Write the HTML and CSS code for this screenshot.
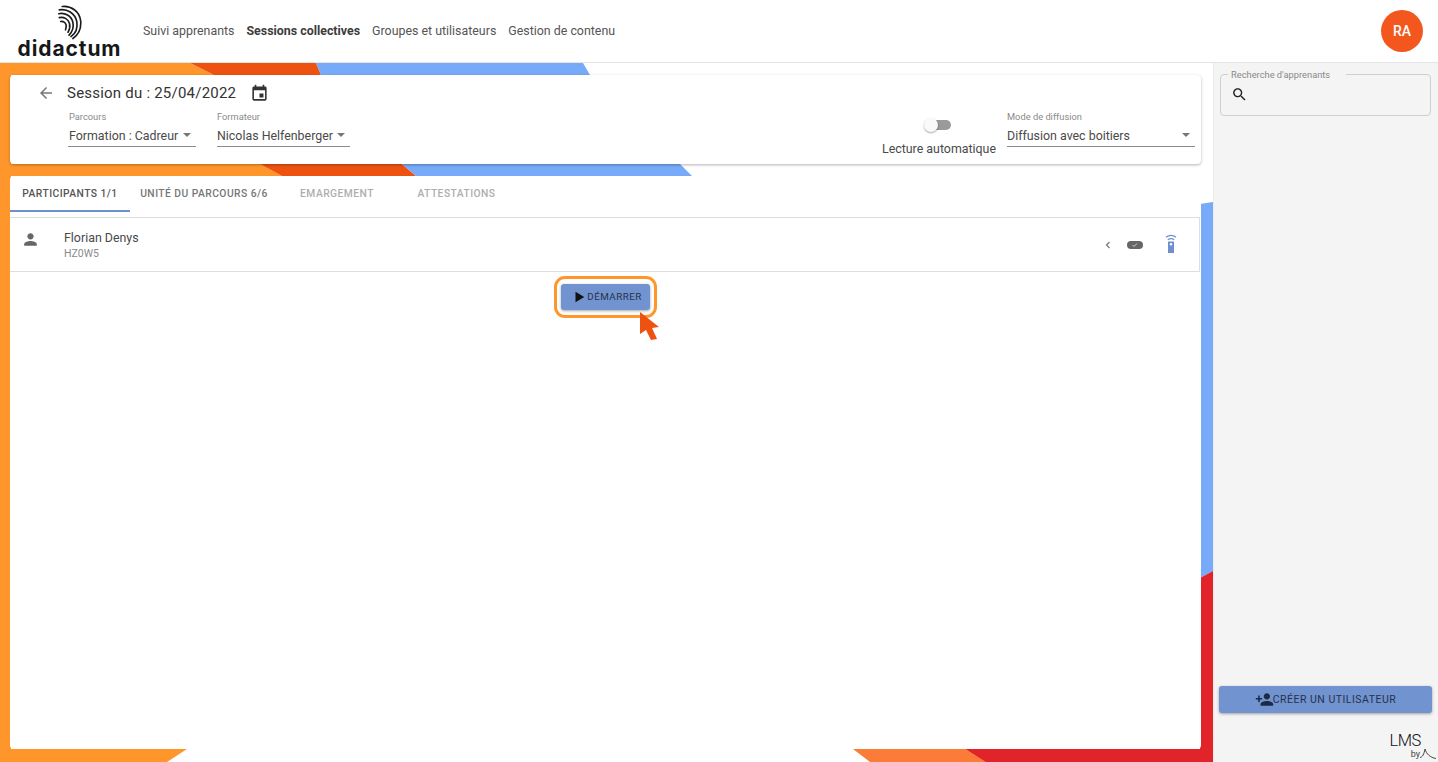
FILE: index.html
```html
<!DOCTYPE html>
<html lang="fr">
<head>
  <meta charset="UTF-8" />
  <meta name="viewport" content="width=device-width, initial-scale=1.0"/>
  <title>Sessions collectives - didactum</title>
  <link rel="stylesheet" href="styles.css">
</head>
<body>
  <header class="topbar">
    <div class="logo">
      <svg class="logo-mark" viewBox="0 0 26 36" fill="none" stroke="#1c1c1c" stroke-linecap="round">
        <path d="M5 1.500c9-1 18 5 19 15 .6 7-2 14-8 18" stroke-width="1.700"/>
        <path d="M2 5c8-1.500 16 3.500 18 12 1 6-1 12-6 15.500" stroke-width="1.700"/>
        <path d="M1.500 9c6-1.500 13 2 14.500 9 1 5-.5 9.500-4 13" stroke-width="1.700"/>
        <path d="M2 13c4.500-1 9 1 10.500 6 .8 3.500 0 6.500-1.500 9" stroke-width="1.700"/>
        <path d="M3.500 17c2.500-.5 5 1 5.500 3.500.4 2 0 3.500-.6 5" stroke-width="1.700"/>
      </svg>
      <span class="logo-name">didactum</span>
    </div>
    <nav class="nav">
      <a>Suivi apprenants</a>
      <a class="active">Sessions collectives</a>
      <a>Groupes et utilisateurs</a>
      <a>Gestion de contenu</a>
    </nav>
    <div class="avatar">RA</div>
  </header>

  <div class="layout">
    <main class="main">
      <svg class="decor" viewBox="0 63 1213 699" preserveAspectRatio="none">
        <rect x="0" y="63" width="11" height="699" fill="#ff962b"/>
        <polygon points="0,63 190,63 214,75 0,75" fill="#ff962b"/>
        <polygon points="190,63 316,63 321,75 214,75" fill="#ee5210"/>
        <polygon points="316,63 583,63 590,75 321,75" fill="#77aaf8"/>
        <polygon points="0,164 260,164 282,176 0,176" fill="#ff962b"/>
        <polygon points="260,164 402,164 416,176 282,176" fill="#ee5210"/>
        <polygon points="402,164 680,164 692,176 416,176" fill="#77aaf8"/>
        <polygon points="1200,204 1213,202 1213,571 1200,578" fill="#77aaf8"/>
        <polygon points="1200,578 1213,571 1213,762 967,762 1200,749" fill="#e1242a"/>
        <polygon points="965,749 1200,749 1213,762 985,762" fill="#e1242a"/>
        <polygon points="853,749 965,749 986,762 870,762" fill="#fb7c38"/>
        <polygon points="0,749 187,749 167,762 0,762" fill="#ff962b"/>
      </svg>

      <section class="card">
        <div class="title-row">
          <svg class="icon back" viewBox="0 0 24 24"><path d="M20 11H7.830l5.590-5.590L12 4l-8 8 8 8 1.410-1.410L7.830 13H20v-2z"/></svg>
          <h1>Session du : 25/04/2022</h1>
          <svg class="icon cal" viewBox="0 0 24 24"><path d="M17 12h-5v5h5v-5zM16 1v2H8V1H6v2H5c-1.110 0-1.990.9-1.990 2L3 19c0 1.100.89 2 2 2h14c1.100 0 2-.9 2-2V5c0-1.100-.9-2-2-2h-1V1h-2zm3 18H5V8h14v11z"/></svg>
        </div>
        <div class="fields">
          <div class="field field-parcours">
            <label>Parcours</label>
            <div class="select"><span>Formation : Cadreur</span><i class="caret"></i></div>
          </div>
          <div class="field field-formateur">
            <label>Formateur</label>
            <div class="select"><span>Nicolas Helfenberger</span><i class="caret"></i></div>
          </div>
          <div class="auto">
            <div class="toggle"><i class="thumb"></i></div>
            <span>Lecture automatique</span>
          </div>
          <div class="field field-mode">
            <label>Mode de diffusion</label>
            <div class="select"><span>Diffusion avec boitiers</span><i class="caret"></i></div>
          </div>
        </div>
      </section>

      <section class="panel">
        <div class="tabs">
          <a class="tab tab-1 active">Participants 1/1</a>
          <a class="tab tab-2">Unité du parcours 6/6</a>
          <a class="tab tab-3 muted">Emargement</a>
          <a class="tab tab-4 muted">Attestations</a>
        </div>

        <div class="participant">
          <svg class="icon person" viewBox="0 0 24 24"><path d="M12 12c2.210 0 4-1.790 4-4s-1.790-4-4-4-4 1.790-4 4 1.790 4 4 4zm0 2c-2.670 0-8 1.340-8 4v2h16v-2c0-2.660-5.330-4-8-4z"/></svg>
          <div class="who">
            <div class="who-name">Florian Denys</div>
            <div class="who-code">HZ0W5</div>
          </div>
          <div class="row-icons">
            <svg class="chev" viewBox="0 0 8 10" fill="none" stroke="#777" stroke-width="1.200"><path d="M5.500 2 2.500 5l3 3"/></svg>
            <svg class="pill" viewBox="0 0 16 8"><rect width="16" height="8" rx="4" fill="#666"/><path d="M5.500 4l1.500 1.500 3-3" fill="none" stroke="#ddd" stroke-width=".9"/></svg>
            <svg class="remote" viewBox="0 0 14 20" fill="none" stroke="#6f8fcf" stroke-width="1.300">
              <path d="M2 3.300C5 .9 9 .9 12 3.300"/>
              <path d="M3.800 5.700c2-1.400 4.400-1.400 6.400 0"/>
              <path fill="#6f8fcf" stroke="none" fill-rule="evenodd" d="M4 7.500h6V19H4zM7 9a1.300 1.300 0 1 0 0 2.600A1.300 1.300 0 0 0 7 9z"/>
            </svg>
          </div>
        </div>

        <div class="start-row">
          <div class="highlight">
            <button class="btn btn-start">
              <svg class="icon play" viewBox="0 0 24 24"><path d="M6 3v18l15-9z"/></svg>Démarrer
            </button>
            <svg class="cursor" viewBox="0 0 19 29"><path d="M0 0v22l6-4 5 10 6-1-5-11 7-1z" fill="#ee5210"/></svg>
          </div>
        </div>
      </section>
    </main>

    <aside class="sidebar">
      <div class="search">
        <span class="search-label">Recherche d'apprenants</span>
        <svg class="icon search-icon" viewBox="0 0 24 24"><path d="M15.500 14h-.79l-.28-.27C15.410 12.590 16 11.110 16 9.500 16 5.910 13.090 3 9.500 3S3 5.910 3 9.500 5.910 16 9.500 16c1.610 0 3.090-.59 4.230-1.570l.27.28v.79l5 4.990L20.490 19l-4.990-5zm-6 0C7.010 14 5 11.990 5 9.500S7.010 5 9.500 5 14 7.010 14 9.500 11.990 14 9.500 14z"/></svg>
      </div>
      <div class="side-bottom">
        <button class="btn btn-create">
          <svg class="icon add" viewBox="0 0 24 24"><path d="M15 12c2.210 0 4-1.790 4-4s-1.790-4-4-4-4 1.790-4 4 1.790 4 4 4zm-9-2V7H4v3H1v2h3v3h2v-3h3v-2H6zm9 4c-2.670 0-8 1.340-8 4v2h16v-2c0-2.660-5.330-4-8-4z"/></svg>Créer un utilisateur
        </button>
        <div class="lms">
          <span class="lms-name">LMS</span>
          <span class="lms-by">by</span>
          <svg class="lms-curve" viewBox="0 0 16 11" fill="none" stroke="#333" stroke-width=".9"><path d="M0 9.500c2.500-.5 4-3 5-8.500 1.500 5 5 8.500 11 9.500"/></svg>
        </div>
      </div>
    </aside>
  </div>
</body>
</html>
```

FILE: styles.css
```css
html, body {
  height: 100%;
}
body {
  margin: 0;
  font-family: Roboto, "Liberation Sans", sans-serif;
  color: #3a3a3a;
  background: #ffffff;
  overflow: hidden;
  display: flex;
  flex-direction: column;
}
.icon {
  display: block;
  flex: none;
  fill: currentColor;
}

/* Barre du haut */
.topbar {
  height: 62px;
  flex: none;
  display: flex;
  align-items: center;
  padding: 0 15px 0 18px;
  border-bottom: 1px solid #e4e4e4;
  background: #ffffff;
}
.logo {
  width: 103px;
  display: flex;
  flex-direction: column;
  align-items: center;
}
.logo-mark {
  width: 26px;
  height: 35px;
  margin-left: 1px;
}
.logo-name {
  font-family: Inter, sans-serif;
  font-weight: 700;
  font-size: 21px;
  line-height: 17px;
  letter-spacing: 0.9px;
  color: #171717;
  white-space: nowrap;
}
.nav {
  display: flex;
  gap: 12px;
  margin-left: 22px;
  margin-top: -1px;
  font-size: 12.400px;
  color: #555;
}
.nav .active {
  font-weight: 700;
  color: #3c3c3c;
}
.avatar {
  width: 42px;
  height: 42px;
  margin-left: auto;
  border-radius: 50%;
  background: #f4571d;
  color: #ffffff;
  font-weight: 500;
  font-size: 14px;
  display: flex;
  align-items: center;
  justify-content: center;
}

/* Zone principale */
.layout {
  flex: 1;
  display: flex;
  min-height: 0;
}
.main {
  width: 1213px;
  flex: none;
  position: relative;
  display: flex;
  flex-direction: column;
  gap: 12px;
  padding: 12px 12px 13px 10px;
  box-sizing: border-box;
}
.decor {
  position: absolute;
  left: 0;
  top: 0;
  width: 100%;
  height: 100%;
}
.card, .panel {
  position: relative;
  background: #ffffff;
  border-radius: 4px;
}
.card {
  height: 89px;
  flex: none;
  box-sizing: border-box;
  padding: 6px 6px 0 28px;
  box-shadow: 0 1px 3px rgba(0,0,0,0.3);
}
.title-row {
  display: flex;
  align-items: center;
  height: 24px;
}
.back {
  width: 18px;
  height: 18px;
  margin-left: -1px;
  color: #777;
}
h1 {
  margin: 0 0 0 12px;
  font-size: 15px;
  font-weight: 400;
  letter-spacing: 0.22px;
  color: #333;
}
.cal {
  width: 19px;
  height: 19px;
  margin-left: 14px;
  color: #333;
}
.fields {
  display: flex;
  align-items: flex-end;
  margin-top: 5px;
  padding-left: 30px;
  height: 46px;
}
.field label {
  display: block;
  font-size: 9.300px;
  line-height: 12px;
  color: #8a8a8a;
}
.select {
  display: flex;
  align-items: center;
  justify-content: space-between;
  height: 22px;
  padding: 1px 5px 0 0;
  border-bottom: 1px solid #8c8c8c;
  font-size: 12.400px;
  color: #4a4a4a;
}
.caret {
  width: 0;
  height: 0;
  border-left: 4px solid transparent;
  border-right: 4px solid transparent;
  border-top: 4px solid #777;
}
.field-parcours {
  width: 128px;
  margin-bottom: 9px;
}
.field-parcours label, .field-parcours span {
  padding-left: 1px;
}
.field-formateur {
  width: 133px;
  margin-left: 21px;
  margin-bottom: 9px;
}
.field-mode {
  width: 188px;
  margin-left: 11px;
  margin-bottom: 9px;
}
.auto {
  margin-left: auto;
  display: flex;
  flex-direction: column;
  align-items: center;
  gap: 11px;
  font-size: 12.400px;
  color: #4a4a4a;
}
.toggle {
  position: relative;
  width: 24px;
  height: 10px;
  margin-left: 1px;
  border-radius: 5px;
  background: #9a9a9a;
}
.thumb {
  position: absolute;
  left: -3px;
  top: -2px;
  width: 14px;
  height: 14px;
  border-radius: 50%;
  background: #fafafa;
  box-shadow: 0 1px 2px rgba(0,0,0,0.35);
}

/* Onglets */
.panel {
  flex: 1;
  display: flex;
  flex-direction: column;
}
.tabs {
  display: flex;
  height: 36px;
  flex: none;
  margin-bottom: 5px;
}
.tab {
  box-sizing: border-box;
  height: 36px;
  line-height: 35px;
  text-align: center;
  text-transform: uppercase;
  font-size: 10.300px;
  font-weight: 500;
  letter-spacing: 0.45px;
  color: #777;
}
.tab.active {
  color: #555;
  border-bottom: 2px solid #6f8fcf;
}
.tab.muted {
  color: #aeaeae;
}
.tab-1 { width: 120px; }
.tab-2 { width: 148px; }
.tab-3 { width: 118px; }
.tab-4 { width: 121px; }

/* Participant */
.participant {
  height: 55px;
  flex: none;
  box-sizing: border-box;
  display: flex;
  align-items: center;
  margin-right: 1px;
  padding: 0 21px 0 11px;
  border: 1px solid #dedede;
  border-left: none;
}
.person {
  width: 19px;
  height: 19px;
  margin-top: -11px;
  color: #666;
}
.who {
  margin-left: 24px;
  padding-top: 1px;
}
.who-name {
  font-size: 12.400px;
  line-height: 16px;
  color: #4a4a4a;
}
.who-code {
  margin-top: 1px;
  font-size: 10.500px;
  line-height: 14px;
  color: #8a8a8a;
}
.row-icons {
  margin-left: auto;
  display: flex;
  align-items: center;
}
.chev {
  width: 8px;
  height: 10px;
}
.pill {
  width: 16px;
  height: 8px;
  margin-left: 15px;
}
.remote {
  width: 14px;
  height: 20px;
  margin-left: 21px;
  margin-top: -2px;
}

/* Bouton demarrer */
.start-row {
  display: flex;
  justify-content: center;
  margin-top: 4px;
}
.highlight {
  position: relative;
  box-sizing: border-box;
  width: 103px;
  height: 42px;
  padding: 4.500px 3.500px 0 3.500px;
  border: 3.500px solid #ff962b;
  border-radius: 11px;
}
.btn {
  display: flex;
  align-items: center;
  justify-content: center;
  border: none;
  border-radius: 3px;
  background: #7193cf;
  color: #26324d;
  font-family: inherit;
  text-transform: uppercase;
  box-shadow: 0 1px 3px rgba(0,0,0,0.35);
}
.btn-start {
  width: 89px;
  height: 26px;
  padding: 0 0 0 4px;
  font-size: 9.800px;
  font-weight: 400;
  letter-spacing: 0.45px;
}
.play {
  width: 14px;
  height: 14px;
  margin-right: 1px;
  color: #111;
}
.cursor {
  position: absolute;
  left: 82.500px;
  top: 32.500px;
  width: 19px;
  height: 29px;
}

/* Colonne de droite */
.sidebar {
  flex: 1;
  display: flex;
  flex-direction: column;
  justify-content: space-between;
  padding: 11px 6px 0 5px;
  background: #f4f4f4;
  border-left: 1px solid #ececec;
}
.search {
  position: relative;
  height: 42px;
  box-sizing: border-box;
  display: flex;
  align-items: center;
  margin: 0 1px;
  padding-left: 10px;
  border: 1px solid #cfcfcf;
  border-radius: 4px;
}
.search-label {
  position: absolute;
  left: 7px;
  top: -6px;
  padding: 0 16px 0 3px;
  background: #f4f4f4;
  font-size: 9.300px;
  line-height: 11px;
  color: #8a8a8a;
}
.search-icon {
  width: 17px;
  height: 17px;
  margin-top: -1px;
  color: #222;
}
.side-bottom {
  display: flex;
  flex-direction: column;
}
.btn-create {
  height: 27px;
  padding: 0;
  font-size: 10.500px;
  letter-spacing: 0.5px;
}
.add {
  width: 19px;
  height: 19px;
  margin-right: -1px;
  color: #1d2a44;
}
.lms {
  position: relative;
  height: 49px;
}
.lms-name {
  position: absolute;
  right: 11px;
  top: 20px;
  font-size: 16.500px;
  line-height: 15px;
  letter-spacing: -0.4px;
  font-weight: 300;
  color: #111;
}
.lms-by {
  position: absolute;
  right: 12px;
  top: 37px;
  font-size: 9px;
  line-height: 8px;
  color: #444;
}
.lms-curve {
  position: absolute;
  right: -4px;
  top: 35px;
  width: 16px;
  height: 11px;
}
```
